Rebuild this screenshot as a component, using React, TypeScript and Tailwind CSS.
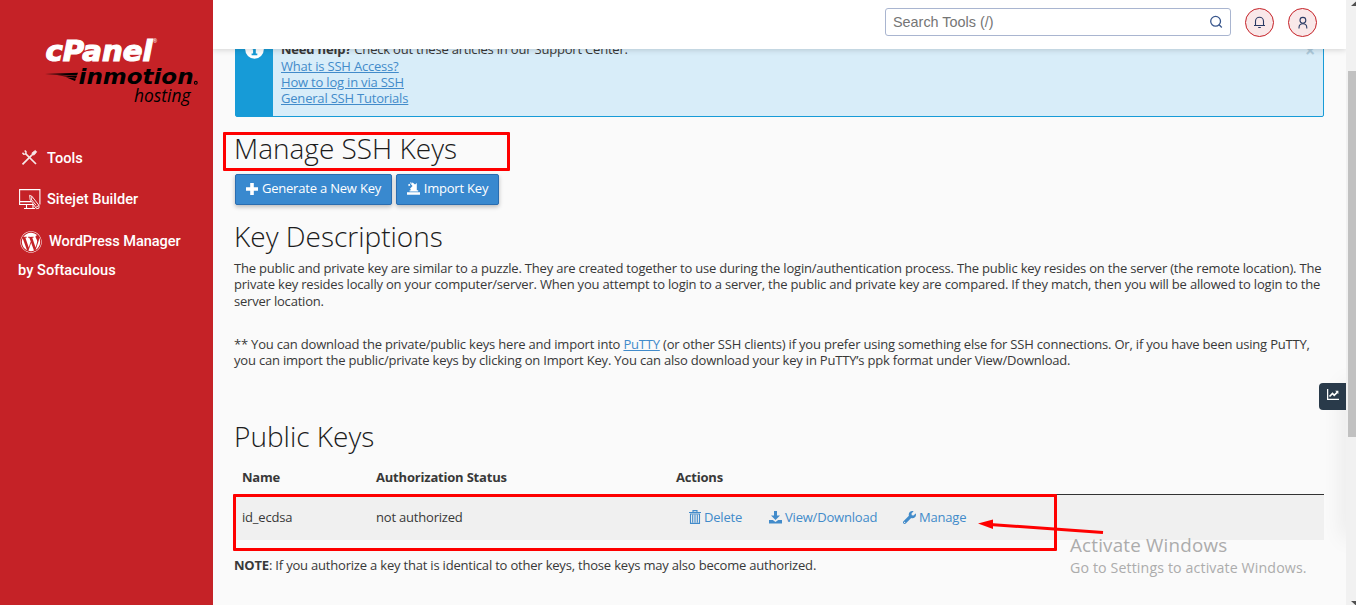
import React from "react";
import { FaWordpress, FaWrench } from "react-icons/fa";

function Logo() {
  return (
    <svg className="ml-11 mt-9 h-[74px] w-[160px]" viewBox="44 36 160 74" aria-label="cPanel inmotion hosting">
      <text x="45.5" y="61.3" fill="#fff" stroke="#fff" strokeWidth="1.2" fontFamily="DejaVu Sans" fontWeight="700" fontStyle="italic" fontSize="28" textLength="107" lengthAdjust="spacingAndGlyphs">cPanel</text>
      <text x="153" y="43" fill="#fff" fontFamily="Open Sans" fontSize="5">®</text>
      <path d="M45 74 L78 72.7 L77 75.5 Z M57 75.3 L77 76 L76 78 Z M66 77.3 L76 78.6 L75 81 Z" fill="#000" />
      <text x="78.5" y="84" fill="#000" fontFamily="DejaVu Sans" fontWeight="700" fontStyle="italic" fontSize="21.5" textLength="115" lengthAdjust="spacingAndGlyphs">inmotion</text>
      <circle cx="195.8" cy="82.8" r="1.4" fill="none" stroke="#000" strokeWidth="1.1" />
      <text x="134" y="101.5" fill="#000" fontFamily="Open Sans" fontStyle="italic" fontSize="18.5" textLength="56.5" lengthAdjust="spacingAndGlyphs">hosting</text>
    </svg>
  );
}

function ToolsIcon() {
  return (
    <svg className="-mt-[3px] h-[17px] w-[17px] shrink-0" viewBox="0 0 17 17" fill="none" stroke="#f7e9e9">
      <path d="M4.8 4.8 15 15" strokeWidth="1.7" />
      <path d="M1.5 3.8 2.7 5.2 4.8 4.9 5 2.8 3.7 1.4" strokeWidth="1.5" />
      <path d="M1.5 15.4 10.8 6.2" strokeWidth="1.7" />
      <path d="M10.8 6.2 11.2 3.7 14.2 1.5 15.7 2.8 13.4 5.8Z" fill="#f7e9e9" strokeWidth="0.8" />
    </svg>
  );
}

function SitejetIcon() {
  return (
    <svg className="-mt-px h-[21px] w-[22px] shrink-0" viewBox="0 0 22 21" fill="none" stroke="#fff">
      <path d="M14 15.5H.6V.6h20.3v14.9M1 12.6h11M7.5 15.5v3.8M14 15.5v3.8M5 19.5h11" strokeWidth="1.1" />
      <path d="M10.6 6.3 13 7.4l7 9v2.8l-2.6.5-6.2-9zM13 7.4l-.5 3M20 16.4l-3 1.9M12 10l5 6.2" strokeWidth=".9" />
    </svg>
  );
}

function ImportIcon() {
  return (
    <svg className="-mt-px h-[13px] w-[13px]" viewBox="0 0 13 13" fill="#fff">
      <path d="M0 10.2h13v2.6H0zM2.6 9.4h8.6V8.2H9.8V1L8 2.6 5.6.6 3.8 1.9l1.7 2L3 6.8l1.2 1.4H2.6z" />
      <path d="M1 2.8l1.5-1 .9 1.4-1.5 1zM3 .6h1.5v1H3z" />
    </svg>
  );
}

function TrashIcon() {
  return (
    <svg className="-mt-px h-[14px] w-[12px]" viewBox="0 0 12 14" fill="none" stroke="#428bca">
      <path d="M0 2.5h12M4 2V.6h4V2M1.5 4h9v9.4h-9zM3.7 4.8v7.6M6 4.8v7.6M8.3 4.8v7.6" strokeWidth="1.1" />
    </svg>
  );
}

function DownloadIcon() {
  return (
    <svg className="h-[13px] w-[13px]" viewBox="0 0 13 13" fill="#428bca">
      <path d="M5 0h3v4.5h3L6.5 9 2 4.5h3z" />
      <path d="M0 9h3.8l2.7 2 2.7-2H13v3.6H0z" />
    </svg>
  );
}

const frame = "pointer-events-none absolute rounded-[1px] border-[3px] border-[#fe0000]";
const button = "flex h-[31px] items-center justify-center gap-[4px] rounded-[2px] border border-[#2a6db0] bg-[#3989cf] pb-[2px] text-white shadow-[0_2px_4px_rgba(0,0,0,0.25)]";
const heading = "-ml-px whitespace-nowrap text-[28px] font-light leading-[38px] tracking-normal text-[#1c1c1c]";

function Header() {
  return (
    <header className="relative z-10 flex h-[49px] shrink-0 items-start justify-end bg-white pr-[29px] pt-2 tracking-normal shadow-[0_1px_6px_rgba(0,0,0,0.16)]">
      <div className="flex h-7 w-[346px] items-center justify-between rounded-[3px] border border-[#a9b5d0] px-[7px] font-['Liberation_Sans'] text-[14.4px] text-[#757575]">
        <span className="pt-px">Search Tools (/)</span>
        <svg className="-mt-px h-[14px] w-[14px]" viewBox="0 0 14 14" fill="none" stroke="#38568c" strokeWidth="1.3">
          <circle cx="6.6" cy="6.3" r="4.9" /><path d="m10.1 9.8 2.7 2.7" />
        </svg>
      </div>
      <div className="ml-[14px] flex h-[29px] w-[29px] items-center justify-center rounded-full border border-[#c52127] bg-[#f9e8e9]">
        <svg className="h-[13px] w-[13px]" viewBox="0 0 13 13" fill="none" stroke="#293a64" strokeWidth="1.1">
          <path d="M1 9.5h11M2.5 9.5V5.2a4 4 0 0 1 8 0v4.3M5.2 11.5h2.6" />
        </svg>
      </div>
      <div className="ml-[14px] flex h-[29px] w-[29px] items-center justify-center rounded-full border border-[#c52127] bg-[#f9e8e9]">
        <svg className="h-[13px] w-[13px]" viewBox="0 0 13 13" fill="none" stroke="#293a64" strokeWidth="1.1">
          <circle cx="6.9" cy="4.3" r="2.9" /><path d="M3 12.6v-.9c0-2.6 1.8-4 3.9-4s3.9 1.4 3.9 4v.9" />
        </svg>
      </div>
    </header>
  );
}

export default function App() {
  return (
    <div className="relative flex h-[605px] w-[1356px] overflow-hidden bg-[#fafafa] font-['Open_Sans',sans-serif] text-[13px] tracking-[-0.197px] text-[#383838]">
      <aside className="w-[213px] shrink-0 bg-[#c52227] font-[Roboto,sans-serif] text-[14.6px] font-medium tracking-normal text-white">
        <Logo />
        <nav>
          <div className="mt-[38px] flex h-[22px] items-center gap-[9px] pl-[21px]"><ToolsIcon /><span>Tools</span></div>
          <div className="mt-[19px] flex h-[22px] items-center gap-[6px] pl-[19px]"><SitejetIcon /><span>Sitejet Builder</span></div>
          <div className="mt-[16px] pl-[18px] leading-[29px] tracking-[-0.07px]">
            <div className="flex items-center gap-[7px] whitespace-nowrap"><FaWordpress className="ml-[2px] h-[22px] w-[22px]" /><span>WordPress Manager</span></div>
            <div className="tracking-[0.04px]">by Softaculous</div>
          </div>
        </nav>
      </aside>

      <div className="flex w-[1133px] flex-col overflow-hidden">
        <Header />
        <main className="min-h-0 grow overflow-hidden px-[22px]">
          <section className="-mt-[18px] flex h-[86px] rounded-[2px] border border-[#179bd7] bg-[#d8edf9] leading-4">
            <div className="flex w-[37px] justify-center bg-[#179bd7] pt-[8px]">
              <svg className="-ml-px h-[19px] w-[19px]" viewBox="0 0 19 19"><circle cx="9.5" cy="9.5" r="9.3" fill="#fff" /><path d="M6.8 7.5h4v6h1.5v1.8H6.6v-1.8h1.5V9.2H6.8zM8.1 3.8h2.7v2.4H8.1z" fill="#179bd7" /></svg>
            </div>
            <div className="grow pl-2 pt-[10px]">
              <div className="-mt-px mb-px"><b>Need help?</b> Check out these articles in our Support Center:</div>
              <div className="flex flex-col items-start text-[#428bca] underline">
                <a>What is SSH Access?</a><a>How to log in via SSH</a><a>General SSH Tutorials</a>
              </div>
            </div>
            <span className="pr-2 pt-[10px] text-[18px] font-bold text-[#adcadb]">×</span>
          </section>

          <h1 className={heading + " mt-[12px]"}>Manage SSH Keys</h1>
          <div className="mt-[7px] flex gap-1">
            <button className={button + " w-[157px]"}>
              <svg className="h-[12px] w-[12px]" viewBox="0 0 12 12" fill="#fff"><path d="M4.2 0h3.6v4.2H12v3.6H7.8V12H4.2V7.8H0V4.2h4.2z" /></svg>
              <span>Generate a New Key</span>
            </button>
            <button className={button + " w-[103px] gap-[3px]"}><ImportIcon /><span>Import Key</span></button>
          </div>
          <h2 className={heading + " mt-[12px]"}>Key Descriptions</h2>
          <p className="-ml-px mt-[5px] whitespace-nowrap leading-[16.3px]">
            The public and private key are similar to a puzzle. They are created together to use during the login/authentication process. The public key resides on the server (the remote location). The<br />
            private key resides locally on your computer/server. When you attempt to login to a server, the public and private key are compared. If they match, then you will be allowed to login to the<br />
            server location.
          </p>
          <p className="-ml-px mt-[27px] whitespace-nowrap leading-[16.3px]">
            ** You can download the private/public keys here and import into <a className="text-[#428bca] underline">PuTTY</a> (or other SSH clients) if you prefer using something else for SSH connections. Or, if you have been using PuTTY,<br />
            you can import the public/private keys by clicking on Import Key. You can also download your key in PuTTY’s ppk format under View/Download.
          </p>
          <h2 className={heading + " mt-[49px]"}>Public Keys</h2>
          <div className="grid h-[40px] grid-cols-[134px_300px_1fr] items-center border-b border-[#333] pl-[7px] pt-[5px] font-bold">
            <span>Name</span><span>Authorization Status</span><span>Actions</span>
          </div>
          <div className="grid h-[45px] grid-cols-[134px_313px_1fr] items-center bg-[#f0f0f0] pl-[7px]">
            <span>id_ecdsa</span><span>not authorized</span>
            <div className="flex text-[#428bca]">
              <span className="flex w-[80px] items-center gap-[3px]"><TrashIcon />Delete</span>
              <span className="flex w-[134px] items-center gap-[3px]"><DownloadIcon />View/Download</span>
              <span className="flex items-center gap-[3px]"><FaWrench className="h-[13px] w-[13px]" />Manage</span>
            </div>
          </div>
          <p className="-ml-px mt-[15px] leading-5"><b>NOTE</b>: If you authorize a key that is identical to other keys, those keys may also become authorized.</p>
        </main>
      </div>

      <div className="relative z-20 flex w-[10px] shrink-0 flex-col items-end justify-between bg-[#f1f1f1]">
        <svg className="h-[71px] w-2" viewBox="0 0 8 71" fill="#505050"><path d="M3 6 8 1.5V6z" /></svg>
        <div className="h-[366px] w-2 bg-[#c1c1c1]" />
        <svg className="h-[168px] w-2" viewBox="0 0 8 168" fill="#505050"><path d="M3 164h5v4.5z" /></svg>
      </div>

      <div className="absolute left-[1346px] top-[383px] z-10 h-[155px] w-[10px] shadow-[0_0_22px_rgba(0,0,0,0.13)]" />
      <div className="absolute left-[1319px] top-[383px] z-20 flex h-[27px] w-[27px] items-center justify-center rounded-l-[4px] bg-[#293a4a] pb-1">
        <svg className="h-[12px] w-[12px]" viewBox="0 0 12 12" fill="none" stroke="#fff"><path d="M.6 0v10.4H12" strokeWidth="1.3" /><path d="m2.5 7.5 3-3 1.7 1.8 3-3" strokeWidth="1.7" /><path d="M8.2 1.8h3.2V5z" fill="#fff" stroke="none" /></svg>
      </div>
      <div className={frame + " left-[223px] top-[132px] h-[39px] w-[287px]"} />
      <div className={frame + " left-[233px] top-[494px] h-[57px] w-[824px]"} />
      <svg className="pointer-events-none absolute left-[976px] top-[514px] h-[24px] w-[130px]" viewBox="976 514 130 24">
        <path d="m990 524.5 113 8" stroke="#fe0000" strokeWidth="3" /><path d="m978 523.5 15-4v9.5z" fill="#fe0000" />
      </svg>
      <div className="pointer-events-none absolute left-[1070px] top-[533px] whitespace-nowrap text-[#acacac]">
        <div className="text-[18.8px] leading-6 tracking-[0.2px]">Activate Windows</div>
        <div className="pt-px text-[14.2px] leading-5 tracking-[0.12px]">Go to Settings to activate Windows.</div>
      </div>
    </div>
  );
}
